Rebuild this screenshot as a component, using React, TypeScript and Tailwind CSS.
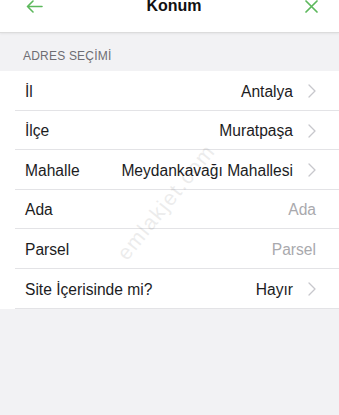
import React from "react";

const font = { fontFamily: '"Liberation Sans", Arial, sans-serif' };

function Chevron() {
  return (
    <svg width="8" height="14" viewBox="0 0 8 14" className="shrink-0">
      <path d="M1 1 L7 7 L1 13" fill="none" stroke="#c7c7cc" strokeWidth="1.3" strokeLinecap="round" strokeLinejoin="round" />
    </svg>
  );
}

type Row = { label: string; value: string; placeholder?: boolean; chevron?: boolean };

const rows: Row[] = [
  { label: "İl", value: "Antalya", chevron: true },
  { label: "İlçe", value: "Muratpaşa", chevron: true },
  { label: "Mahalle", value: "Meydankavağı Mahallesi", chevron: true },
  { label: "Ada", value: "Ada", placeholder: true },
  { label: "Parsel", value: "Parsel", placeholder: true },
  { label: "Site İçerisinde mi?", value: "Hayır", chevron: true },
];

export default function App() {
  return (
    <div className="relative w-[339px] h-[415px] overflow-hidden bg-[#f2f2f4]" style={font}>
      <div className="h-[33px] bg-white border-b border-[#dcdcdc] shadow-[0_1px_2px_rgba(0,0,0,0.06)]">
        <div className="-translate-y-[2px] h-[16px] flex items-center justify-between pl-[26px] pr-[21px]">
          <svg width="17" height="13" viewBox="0 0 17 13">
            <path d="M16 6.5 H1.5 M7 1 L1.5 6.5 L7 12" fill="none" stroke="#5cb85c" strokeWidth="1.6" strokeLinecap="round" strokeLinejoin="round" />
          </svg>
          <span className="text-[16px] font-bold text-[#111] leading-none">Konum</span>
          <svg width="13" height="13" viewBox="0 0 13 13">
            <path d="M1 1 L12 12 M12 1 L1 12" fill="none" stroke="#5cb85c" strokeWidth="1.7" strokeLinecap="round" />
          </svg>
        </div>
      </div>
      <div className="h-[38px] flex items-end pb-[9px] pl-[23px]">
        <span className="text-[12px] text-[#6d6d72] tracking-[0.2px] leading-none">ADRES SEÇİMİ</span>
      </div>
      <div className="bg-white">
        {rows.map((r) => (
          <div key={r.label} className="pl-[15px]">
            <div className="h-[39.6px] pt-[2px] flex items-center justify-between border-b border-[#e3e3e6] pl-[10px] pr-[23px] text-[15.6px]">
              <span className="text-[#1c1c1e]">{r.label}</span>
              <div className="flex items-center gap-[15px]">
                <span className={r.placeholder ? "text-[#a9a9ad]" : "text-[#1c1c1e]"}>{r.value}</span>
                {r.chevron ? <Chevron /> : null}
              </div>
            </div>
          </div>
        ))}
      </div>
      <div
        className="pointer-events-none absolute left-[166px] top-[202px] -translate-x-1/2 -translate-y-1/2 -rotate-[51deg] whitespace-nowrap text-[21px] tracking-[1.5px] text-[#000] opacity-[0.07]"
        style={font}
      >
        emlakjet.com
      </div>
    </div>
  );
}
